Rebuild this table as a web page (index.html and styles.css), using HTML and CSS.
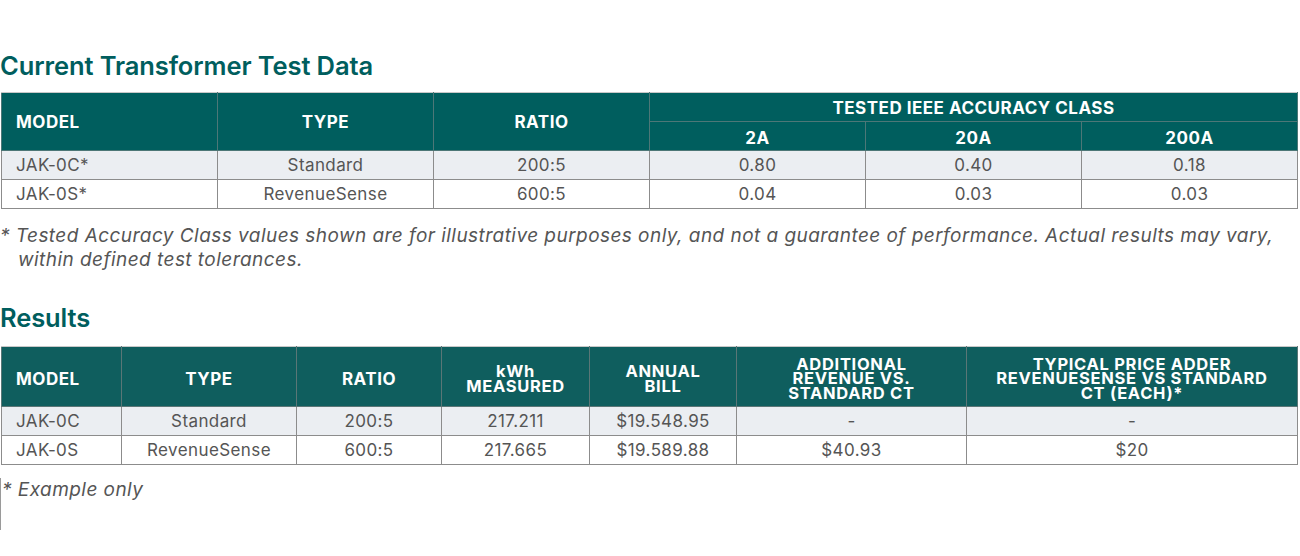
FILE: index.html
```html
<!DOCTYPE html>
<html lang="en">
<head>
<meta charset="utf-8">
<title>Current Transformer Test Data</title>
<link rel="stylesheet" href="styles.css">
</head>
<body>
<main class="page">
  <h2 class="heading heading-first">Current Transformer Test Data</h2>
  <table class="data data-ct">
    <colgroup>
      <col class="c216"><col class="c216"><col class="c216"><col class="c216"><col class="c216"><col>
    </colgroup>
    <thead>
      <tr>
        <th rowspan="2" class="left">MODEL</th>
        <th rowspan="2">TYPE</th>
        <th rowspan="2">RATIO</th>
        <th colspan="3" class="group">TESTED IEEE ACCURACY CLASS</th>
      </tr>
      <tr class="sub">
        <th>2A</th>
        <th>20A</th>
        <th>200A</th>
      </tr>
    </thead>
    <tbody>
      <tr class="alt">
        <td class="left">JAK-0C*</td><td>Standard</td><td>200:5</td><td>0.80</td><td>0.40</td><td>0.18</td>
      </tr>
      <tr>
        <td class="left">JAK-0S*</td><td>RevenueSense</td><td>600:5</td><td>0.04</td><td>0.03</td><td>0.03</td>
      </tr>
    </tbody>
  </table>
  <p class="note note-ct">* Tested Accuracy Class values shown are for illustrative purposes only, and not a guarantee of performance. Actual results may vary, within defined test tolerances.</p>

  <h2 class="heading heading-results">Results</h2>
  <table class="data data-res">
    <colgroup>
      <col class="r1"><col class="r2"><col class="r3"><col class="r4"><col class="r5"><col class="r6"><col>
    </colgroup>
    <thead>
      <tr class="tall">
        <th class="left">MODEL</th>
        <th>TYPE</th>
        <th>RATIO</th>
        <th class="multi">kWh<br>MEASURED</th>
        <th class="multi">ANNUAL<br>BILL</th>
        <th class="multi">ADDITIONAL<br>REVENUE VS.<br>STANDARD CT</th>
        <th class="multi">TYPICAL PRICE ADDER<br>REVENUESENSE VS STANDARD<br>CT (EACH)*</th>
      </tr>
    </thead>
    <tbody>
      <tr class="alt">
        <td class="left">JAK-0C</td><td>Standard</td><td>200:5</td><td>217.211</td><td>$19.548.95</td><td>-</td><td>-</td>
      </tr>
      <tr>
        <td class="left">JAK-0S</td><td>RevenueSense</td><td>600:5</td><td>217.665</td><td>$19.589.88</td><td>$40.93</td><td>$20</td>
      </tr>
    </tbody>
  </table>
  <div class="example">
    <p class="note">* Example only</p>
  </div>
</main>
</body>
</html>
```
FILE: styles.css
```css
html, body {
  margin: 0;
  padding: 0;
  background: #ffffff;
}

body {
  font-family: Inter, "Noto Sans", "Liberation Sans", sans-serif;
  color: #555555;
}

.page {
  padding: 51px 2px 0 0;
}

.heading {
  margin: 0 0 12px 0;
  font-size: 25.5px;
  line-height: 29px;
  font-weight: 600;
  color: #005e5e;
  letter-spacing: -0.1px;
}

.heading-results {
  margin-bottom: 14px;
}

.data {
  border-collapse: collapse;
  table-layout: fixed;
  width: 1297px;
  margin-left: 1px;
}

.c216 { width: 216px; }

.r1 { width: 120px; }
.r2 { width: 175px; }
.r3 { width: 145px; }
.r4 { width: 148px; }
.r5 { width: 147px; }
.r6 { width: 230px; }

.data th,
.data td {
  border: 1px solid #8c8c8c;
  padding: 0 4px;
  text-align: center;
  vertical-align: middle;
  font-size: 17px;
}

.data th {
  color: #ffffff;
  font-weight: 700;
  letter-spacing: 0.5px;
  line-height: 20px;
}

.data-ct th {
  background: #005e5e;
  border-color: #4d7777;
  height: 28px;
}

.data-ct thead tr:first-child th {
  border-top-color: #c8c8c8;
}

.data-ct .group {
  height: 27px;
  padding-top: 1px;
}

.data-ct .sub th {
  height: 25px;
  padding-top: 3px;
}

.data-res th {
  background: #0f5e5e;
  border-color: #5a7676;
  border-top-color: #c8c8c8;
  height: 54px;
  padding-top: 5px;
}

.data-res .multi {
  font-size: 16.5px;
  line-height: 14.5px;
  letter-spacing: 0.7px;
  padding-top: 4px;
  height: 55px;
}

.data td {
  height: 28px;
  line-height: 20px;
  font-weight: 400;
  color: #555555;
  letter-spacing: 0.4px;
}

.data .left {
  text-align: left;
  padding-left: 14px;
}

.data tr.alt td {
  background: #ebeef2;
}

.note {
  margin: 0;
  font-size: 19px;
  line-height: 24px;
  font-style: italic;
  color: #555555;
  letter-spacing: 0.45px;
}

.note-ct {
  margin: 15px 0 31px 0;
  padding-left: 18px;
  text-indent: -18px;
}

.example {
  margin-top: 13px;
  height: 52px;
  border-left: 1px solid #9a9a9a;
}

.example .note {
  padding-left: 1px;
}
```
